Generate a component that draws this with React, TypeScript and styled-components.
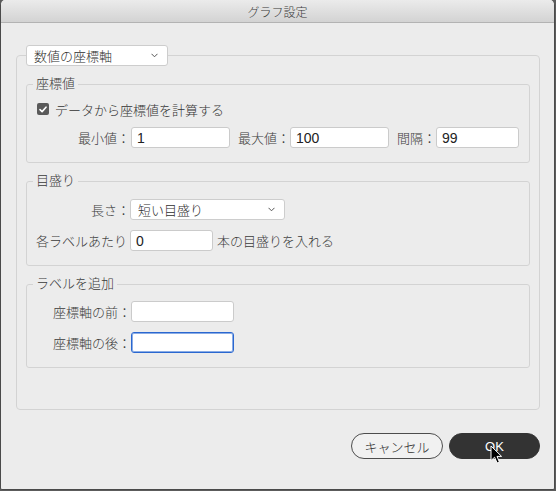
import React from "react";
import styled, { createGlobalStyle } from "styled-components";

const GlobalStyle = createGlobalStyle`
  html, body {
    margin: 0;
    padding: 0;
    background: #5c5c5c;
  }
  body {
    width: 556px;
    height: 491px;
    overflow: hidden;
    font-family: "Liberation Sans", "Noto Sans CJK JP", sans-serif;
    font-weight: 300;
    color: #333;
  }
`;

const Window = styled.div`
  position: relative;
  width: 553px;
  height: 489px;
  border: 1px solid #4a4a4a;
  border-top: none;
  border-radius: 5px 5px 2px 2px;
  background: #ececec;
  display: flex;
  flex-direction: column;
  overflow: hidden;
`;

const TitleBar = styled.div`
  height: 22px;
  flex: none;
  display: flex;
  align-items: center;
  justify-content: center;
  border-bottom: 1px solid #b3b3b3;
  background: linear-gradient(#ebebeb, #d3d3d3);
  font-size: 12px;
  color: #3a3a3a;
`;

const Content = styled.div`
  padding: 22px 14px 0 15px;
  display: flex;
  flex-direction: column;
`;

const OuterBox = styled.fieldset`
  margin: 0;
  padding: 9px 9px 41px;
  border: 1px solid #d3d3d3;
  border-radius: 4px;
  min-width: 0;

  > legend {
    padding: 0;
    margin: 0;
  }
`;

const Stack = styled.div`
  display: flex;
  flex-direction: column;
  gap: 9px;
`;

const Group = styled.fieldset<{ $padTop: number; $gap: number }>`
  margin: 0;
  padding: ${(p) => p.$padTop}px 9px 14px;
  border: 1px solid #d3d3d3;
  border-radius: 3px;
  min-width: 0;
  display: flex;
  flex-direction: column;
  gap: ${(p) => p.$gap}px;

  > legend {
    margin-left: -3px;
    padding: 0 3px;
    font-size: 13px;
    line-height: 18px;
    color: #3a3a3a;
  }
`;

const Row = styled.div`
  display: flex;
  align-items: center;
  height: 21px;
  font-size: 13px;
`;

const CheckRow = styled.label`
  display: flex;
  align-items: center;
  gap: 6px;
  height: 18px;
  padding-left: 1px;
  font-size: 13px;
  color: #333;
`;

const CheckMark = styled.span`
  width: 12px;
  height: 12px;
  border-radius: 2px;
  background: #5a5a5a;
  display: flex;
  align-items: center;
  justify-content: center;
`;

const FieldLabel = styled.span<{ $w?: number; $ml?: number }>`
  display: flex;
  justify-content: flex-end;
  white-space: nowrap;
  flex: none;
  width: ${(p) => (p.$w ? `${p.$w}px` : "auto")};
  margin-left: ${(p) => p.$ml ?? 0}px;
  font-size: 13px;
  color: #3a3a3a;
`;

const TextInput = styled.input<{ $w: number; $ml?: number; $focused?: boolean }>`
  box-sizing: border-box;
  width: ${(p) => p.$w}px;
  height: 21px;
  flex: none;
  margin: 0 0 0 ${(p) => p.$ml ?? 0}px;
  padding: 0 5px;
  border: 1px solid ${(p) => (p.$focused ? "#2a67d0" : "#cbcbcb")};
  box-shadow: ${(p) =>
    p.$focused ? "inset 0 0 0 1px rgba(42, 103, 208, 0.55)" : "none"};
  border-radius: 3px;
  background: #fff;
  font-family: "Liberation Sans", "Noto Sans CJK JP", sans-serif;
  font-size: 14px;
  color: #222;
  outline: none;
`;

const Select = styled.div<{ $w: number }>`
  box-sizing: border-box;
  width: ${(p) => p.$w}px;
  height: 21px;
  flex: none;
  display: flex;
  align-items: center;
  justify-content: space-between;
  padding: 0 9px 0 7px;
  border: 1px solid #cdcdcd;
  border-radius: 3px;
  background: #fff;
  font-size: 13px;
  color: #2e2e2e;
`;

const Suffix = styled.span`
  margin-left: 4px;
  font-size: 13px;
  color: #3a3a3a;
  white-space: nowrap;
`;

const ButtonRow = styled.div`
  display: flex;
  justify-content: flex-end;
  gap: 6px;
  margin-top: 23px;
`;

const Button = styled.button<{ $primary?: boolean; $w: number }>`
  box-sizing: border-box;
  width: ${(p) => p.$w}px;
  height: 26px;
  border-radius: 13px;
  border: 1px solid ${(p) => (p.$primary ? "#333" : "#4d4d4d")};
  background: ${(p) => (p.$primary ? "#333" : "#f1f1f1")};
  color: ${(p) => (p.$primary ? "#fff" : "#2e2e2e")};
  font-family: "Liberation Sans", "Noto Sans CJK JP", sans-serif;
  font-weight: 300;
  font-size: 13px;
  padding: 0;
`;

const Cursor = styled.svg`
  position: absolute;
  left: 489px;
  top: 445px;
`;

const Chevron = () => (
  <svg width="7" height="5" viewBox="0 0 7 5">
    <path d="M0.5 0.8 L3.5 3.8 L6.5 0.8" fill="none" stroke="#555" strokeWidth="1" />
  </svg>
);

export default function App() {
  return (
    <>
      <GlobalStyle />
      <Window>
        <TitleBar>グラフ設定</TitleBar>
        <Content>
          <OuterBox>
            <legend>
              <Select $w={142}>
                <span>数値の座標軸</span>
                <Chevron />
              </Select>
            </legend>
            <Stack>
              <Group $padTop={7} $gap={9}>
                <legend>座標値</legend>
                <CheckRow>
                  <CheckMark>
                    <svg width="8" height="7" viewBox="0 0 8 7">
                      <path
                        d="M1 3.6 L3.1 5.6 L7 1.2"
                        fill="none"
                        stroke="#fff"
                        strokeWidth="1.6"
                        strokeLinecap="round"
                        strokeLinejoin="round"
                      />
                    </svg>
                  </CheckMark>
                  データから座標値を計算する
                </CheckRow>
                <Row>
                  <FieldLabel $w={94}>最小値：</FieldLabel>
                  <TextInput $w={99} $ml={1} defaultValue="1" readOnly />
                  <FieldLabel $w={51} $ml={9}>最大値：</FieldLabel>
                  <TextInput $w={99} defaultValue="100" readOnly />
                  <FieldLabel $w={37} $ml={10}>間隔：</FieldLabel>
                  <TextInput $w={83} defaultValue="99" readOnly />
                </Row>
              </Group>

              <Group $padTop={9} $gap={10}>
                <legend>目盛り</legend>
                <Row>
                  <FieldLabel $w={94}>長さ：</FieldLabel>
                  <Select $w={155}>
                    <span>短い目盛り</span>
                    <Chevron />
                  </Select>
                </Row>
                <Row>
                  <FieldLabel>各ラベルあたり</FieldLabel>
                  <TextInput $w={83} $ml={3} defaultValue="0" readOnly />
                  <Suffix>本の目盛りを入れる</Suffix>
                </Row>
              </Group>

              <Group $padTop={8} $gap={10}>
                <legend>ラベルを追加</legend>
                <Row>
                  <FieldLabel $w={95}>座標軸の前：</FieldLabel>
                  <TextInput $w={103} defaultValue="" readOnly />
                </Row>
                <Row>
                  <FieldLabel $w={95}>座標軸の後：</FieldLabel>
                  <TextInput $w={103} $focused defaultValue="" readOnly />
                </Row>
              </Group>
            </Stack>
          </OuterBox>

          <ButtonRow>
            <Button $w={92}>キャンセル</Button>
            <Button $w={91} $primary>
              OK
            </Button>
          </ButtonRow>
        </Content>

        <Cursor width="13" height="20" viewBox="0 0 13 20">
          <path
            d="M1 1 L1 15.5 L4.6 12.2 L7.1 18 L9.4 17 L7 11.4 L11.6 11.4 Z"
            fill="#000"
            stroke="#fff"
            strokeWidth="1"
            strokeLinejoin="round"
          />
        </Cursor>
      </Window>
    </>
  );
}
